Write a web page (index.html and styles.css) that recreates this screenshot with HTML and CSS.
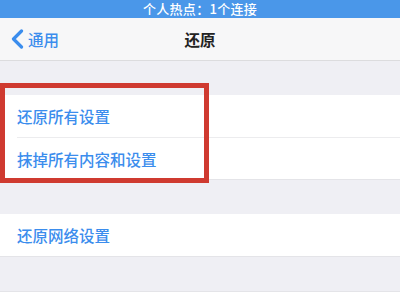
FILE: index.html
```html
<!DOCTYPE html>
<html lang="zh-CN">
<head>
<meta charset="utf-8">
<link rel="stylesheet" href="styles.css">
</head>
<body>
<div class="screen">
  <div class="status">个人热点：1个连接</div>
  <div class="nav">
    <div class="back">
      <svg class="chev" width="13" height="20" viewBox="0 0 13 20"><path d="M10.5 2 L2.5 10 L10.5 18" fill="none" stroke="#3b8ded" stroke-width="3.2" stroke-linecap="round" stroke-linejoin="round"/></svg>
      <span>通用</span>
    </div>
    <div class="title">还原</div>
    <div></div>
  </div>
  <div class="spacer"></div>
  <div class="group">
    <div class="row">还原所有设置</div>
    <div class="row">抹掉所有内容和设置</div>
  </div>
  <div class="spacer"></div>
  <div class="group">
    <div class="row single">还原网络设置</div>
  </div>
  <div class="spacer"></div>
  <div class="group tail"></div>
  <div class="highlight"></div>
</div>
</body>
</html>
```
FILE: styles.css
```css
html, body {
  margin: 0;
  padding: 0;
}
body {
  width: 400px;
  height: 300px;
  overflow: hidden;
  background: #efeff4;
  font-family: "Noto Sans CJK SC", "Noto Sans", sans-serif;
}
.screen {
  position: relative;
  width: 400px;
  height: 300px;
}
.status {
  height: 18px;
  line-height: 18px;
  background: #4a97e9;
  color: #fff;
  font-size: 13px;
  font-weight: 500;
  text-align: center;
  letter-spacing: 0.3px;
}
.nav {
  height: 42px;
  background: #f7f7f8;
  border-bottom: 1px solid #dcdcde;
  display: grid;
  grid-template-columns: 1fr auto 1fr;
  align-items: center;
}
.back {
  display: flex;
  align-items: center;
  gap: 4px;
  padding-left: 11px;
  color: #3b8ded;
  font-size: 15.5px;
  font-weight: 500;
}
.title {
  font-size: 15.5px;
  font-weight: 700;
  color: #222;
}
.spacer {
  height: 34px;
}
.group {
  background: #fff;
  border-bottom: 1px solid #e4e4e8;
}
.row {
  height: 42px;
  line-height: 42px;
  margin-left: 17px;
  color: #3b8ded;
  font-size: 15.5px;
  font-weight: 500;
}
.row + .row {
  height: 41px;
  border-top: 1px solid #ececee;
}
.row.single {
  height: 42px;
}
.tail {
  height: 20px;
  border-top: 1px solid #e4e4e8;
  border-bottom: none;
}
.highlight {
  position: absolute;
  left: 0;
  top: 83px;
  width: 209px;
  height: 100px;
  box-sizing: border-box;
  border: 5px solid #cf3a30;
}
```
